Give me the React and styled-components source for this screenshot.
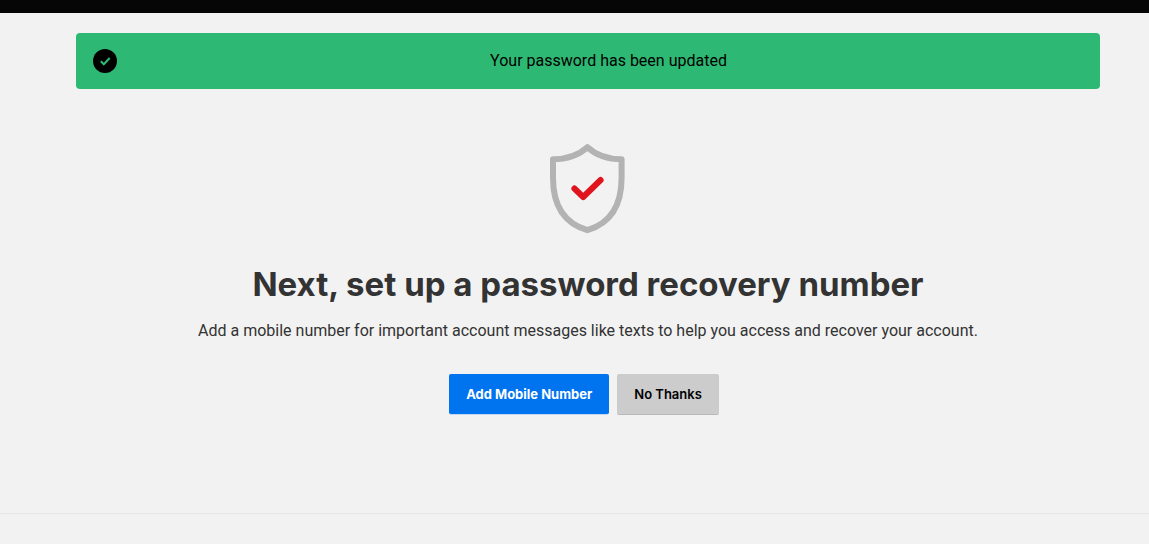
import React from "react";
import styled, { createGlobalStyle } from "styled-components";

const GlobalStyle = createGlobalStyle`
  * { box-sizing: border-box; }
  body {
    margin: 0;
    background: #f2f2f2;
    color: #333;
    font-family: Roboto, "Liberation Sans", sans-serif;
    font-size: 16px;
    line-height: 24px;
  }
`;

const TopBar = styled.header`
  height: 13px;
  background: #060606;
`;

const Main = styled.main`
  padding: 20px 49px 98px 76px;
`;

const Banner = styled.div`
  display: flex;
  align-items: center;
  padding: 16px 0 16px 17px;
  border-radius: 4px;
  background: #2db974;
  color: #000;
`;

const BannerIcon = styled.svg`
  flex: none;
  width: 24px;
  height: 24px;
`;

const BannerText = styled.p`
  flex: 1;
  margin: 0;
  text-align: center;
`;

const Prompt = styled.section`
  display: flex;
  flex-direction: column;
  align-items: center;
  padding-top: 54px;
  text-align: center;
`;

const Shield = styled.svg`
  width: 78px;
  height: 92px;
`;

const Title = styled.h1`
  margin: 27px 0 0;
  font-family: Inter, "Liberation Sans", sans-serif;
  font-size: 33px;
  line-height: 44px;
  font-weight: 700;
`;

const Description = styled.p`
  margin: 13px 0 0;
`;

const Actions = styled.div`
  display: flex;
  gap: 8px;
  margin: 31px 8px 0 0;
`;

const Button = styled.button`
  height: 41px;
  padding: 0 17px;
  border: 0;
  border-bottom: 1px solid ${(p) => (p.$primary ? "#c3d9f1" : "#b9b9b9")};
  border-radius: 2px;
  background: ${(p) => (p.$primary ? "#0073ef" : "#ccc")};
  background-clip: padding-box;
  color: ${(p) => (p.$primary ? "#fff" : "#000")};
  font: ${(p) => (p.$primary ? 700 : 600)} 13px/20px Inter, "Liberation Sans", sans-serif;
  cursor: pointer;
`;

const Footer = styled.footer`
  height: 30px;
  border-top: 1px solid #e6e6e6;
`;

export default function App() {
  return (
    <>
      <GlobalStyle />
      <TopBar />
      <Main>
        <Banner role="status">
          <BannerIcon viewBox="0 0 24 24" aria-hidden="true">
            <circle cx="12" cy="12" r="12" fill="#000" />
            <path d="M7.8 12.2l3 3L16.7 9" fill="none" stroke="#2db974" strokeWidth="2" />
          </BannerIcon>
          <BannerText>Your password has been updated</BannerText>
        </Banner>
        <Prompt>
          <Shield viewBox="0 0 78 92" aria-hidden="true">
            <path
              d="M38.4 4.2C30.4 11.5 19 16.2 4 16.2V35C4 64 16 80.5 38.4 87.2C60.5 80.5 72.6 64 72.6 35V16.2C57.5 16.2 46.4 11.5 38.4 4.2Z"
              fill="none"
              stroke="#b3b3b3"
              strokeWidth="6"
              strokeLinejoin="round"
            />
            <path
              d="M25.4 45.5L34.2 54L51.6 37"
              fill="none"
              stroke="#e0141c"
              strokeWidth="6"
              strokeLinecap="round"
              strokeLinejoin="round"
            />
          </Shield>
          <Title>Next, set up a password recovery number</Title>
          <Description>
            Add a mobile number for important account messages like texts to help you access and recover your account.
          </Description>
          <Actions>
            <Button type="button" $primary>Add Mobile Number</Button>
            <Button type="button">No Thanks</Button>
          </Actions>
        </Prompt>
      </Main>
      <Footer />
    </>
  );
}
